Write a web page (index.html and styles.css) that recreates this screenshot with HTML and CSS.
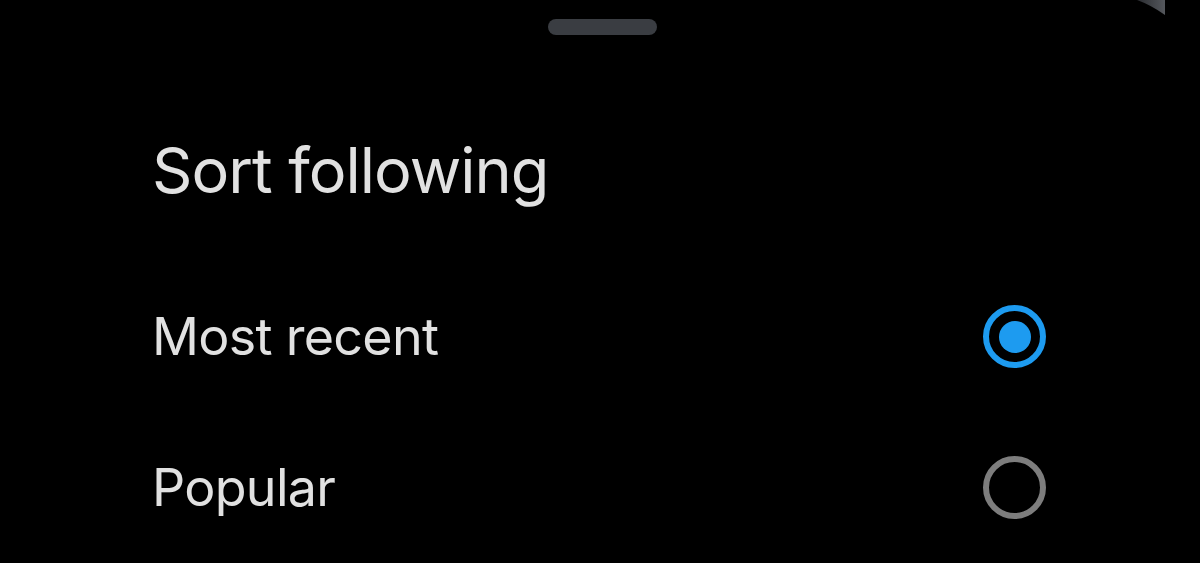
FILE: index.html
```html
<!DOCTYPE html>
<html lang="en">
<head>
    <meta charset="UTF-8">
    <meta name="viewport" content="width=device-width, initial-scale=1.0">
    <title>Sort following</title>
    <link rel="stylesheet" href="styles.css">
</head>
<body>
    <div class="corner">
        <svg width="60" height="16" viewBox="0 0 60 16">
            <defs>
                <linearGradient id="cornerFade" x1="0" y1="0" x2="1" y2="0">
                    <stop offset="0" stop-color="#2a2c30"/>
                    <stop offset="1" stop-color="#55585d"/>
                </linearGradient>
            </defs>
            <path d="M0 0 L28 0 L28 15 Q14 5 0 0 Z" fill="url(#cornerFade)"/>
        </svg>
    </div>
    <div class="sheet">
        <div class="handle"></div>
        <h1 class="sheet-title">Sort following</h1>
        <div class="option">
            <span class="option-label">Most recent</span>
            <span class="radio checked"></span>
        </div>
        <div class="option">
            <span class="option-label">Popular</span>
            <span class="radio"></span>
        </div>
    </div>
</body>
</html>
```

FILE: styles.css
```css
body {
    margin: 0;
    background-color: #000;
    color: #e1e1e1;
    font-family: 'Inter', 'Noto Sans', sans-serif;
    height: 563px;
    overflow: hidden;
}

.corner {
    position: absolute;
    top: 0;
    left: 1137px;
    line-height: 0;
}

.sheet {
    display: flex;
    flex-direction: column;
    padding: 0 154px 0 152px;
}

.handle {
    align-self: center;
    width: 109px;
    height: 16px;
    margin: 19px 0 0 6px;
    border-radius: 8px;
    background-color: #3a3d42;
}

.sheet-title {
    margin: 0;
    padding-top: 96px;
    height: 130px;
    font-size: 63px;
    font-weight: 400;
    line-height: 78px;
    letter-spacing: -1px;
}

.option {
    display: flex;
    align-items: center;
    justify-content: space-between;
    height: 151px;
}

.option-label {
    font-size: 52px;
    letter-spacing: -0.7px;
}

.radio {
    box-sizing: border-box;
    width: 63px;
    height: 63px;
    border: 6px solid #7d7d7d;
    border-radius: 50%;
    display: flex;
    align-items: center;
    justify-content: center;
}

.radio.checked {
    border-color: #1d9bf0;
}

.radio.checked::after {
    content: "";
    width: 32px;
    height: 32px;
    border-radius: 50%;
    background-color: #1d9bf0;
}
```
